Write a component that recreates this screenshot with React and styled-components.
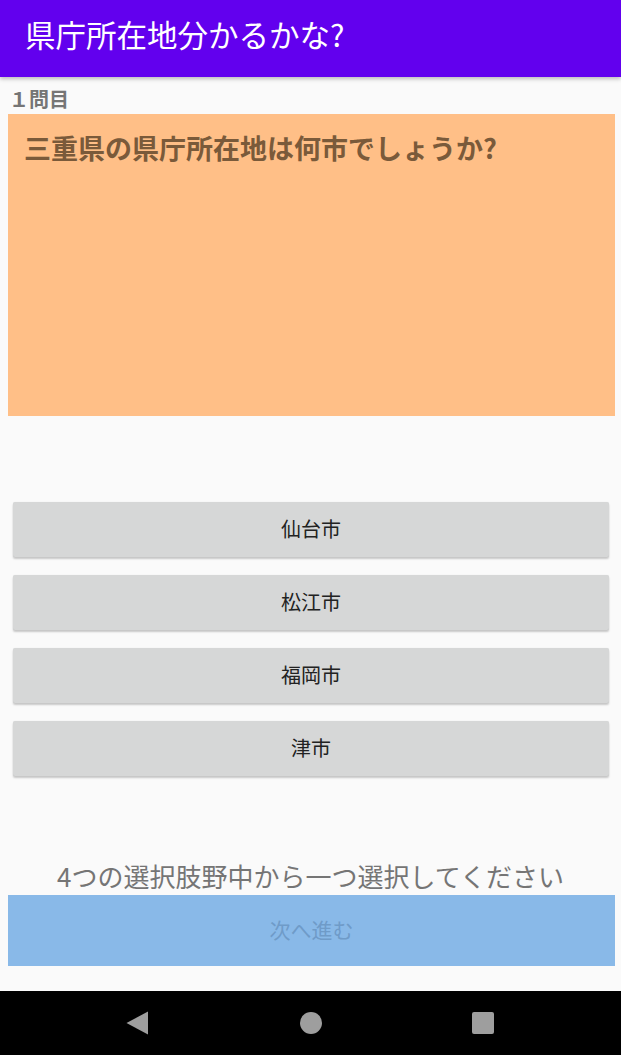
import React, { useState } from "react";
import styled, { createGlobalStyle } from "styled-components";

const Global = createGlobalStyle`
  html, body {
    margin: 0;
    padding: 0;
    background: #fafafa;
  }
  body {
    font-family: "Noto Sans CJK JP", "Noto Sans", sans-serif;
  }
`;

const Screen = styled.div`
  width: 621px;
  height: 1055px;
  display: flex;
  flex-direction: column;
  background: #fafafa;
  overflow: hidden;
`;

const AppBar = styled.header`
  height: 77px;
  flex: none;
  background: #6200ee;
  display: flex;
  align-items: center;
  padding: 0 0 10px 25px;
  box-sizing: border-box;
  box-shadow: 0 2px 4px rgba(0, 0, 0, 0.25);
  position: relative;
  z-index: 1;
`;

const Title = styled.h1`
  margin: 0;
  color: #fff;
  font-size: 30.5px;
  font-weight: 400;
`;

const Main = styled.main`
  flex: 1;
  display: flex;
  flex-direction: column;
`;

const Count = styled.div`
  height: 37px;
  padding: 8px 0 0 9px;
  box-sizing: border-box;
  color: #757575;
  font-size: 20px;
  font-weight: 700;
  line-height: 28px;
`;

const QuestionBox = styled.div`
  height: 302px;
  margin: 0 6px 0 8px;
  background: #ffbf87;
  padding: 14px 16px;
  box-sizing: border-box;
`;

const QuestionText = styled.p`
  margin: 0;
  color: #7a5a3a;
  font-size: 27px;
  font-weight: 700;
  line-height: 40px;
`;

const Choices = styled.div`
  display: flex;
  flex-direction: column;
  gap: 18px;
  margin: 86px 12px 0 13px;
`;

const Choice = styled.button`
  height: 55px;
  padding: 0 0 3px;
  border: none;
  border-radius: 2px;
  background: ${(p) => (p.selected ? "#bdbdbd" : "#d6d7d7")};
  box-shadow: 0 2px 2px rgba(0, 0, 0, 0.2), 0 0 1px rgba(0, 0, 0, 0.12);
  color: #222;
  font-family: inherit;
  font-size: 20px;
  cursor: pointer;
`;

const Hint = styled.p`
  margin: 81px 0 0;
  text-align: center;
  color: #757575;
  font-size: 26px;
  line-height: 38px;
`;

const NextButton = styled.button`
  height: 71px;
  margin: 0 6px 0 8px;
  padding: 0 0 3px;
  border: none;
  background: #89b9e8;
  color: #6f9bc8;
  font-family: inherit;
  font-size: 21px;
`;

const NavBar = styled.nav`
  height: 64px;
  flex: none;
  background: #000;
  display: flex;
  align-items: center;
  justify-content: space-between;
  padding: 0 126px;
  box-sizing: border-box;
`;

const NavIcon = styled.svg`
  width: 24px;
  height: 24px;
  fill: #9e9e9e;
`;

const cities = ["仙台市", "松江市", "福岡市", "津市"];

const App = () => {
  const [picked, setPicked] = useState(null);
  return (
    <>
      <Global />
      <Screen>
        <AppBar>
          <Title>県庁所在地分かるかな?</Title>
        </AppBar>
        <Main>
          <Count>１問目</Count>
          <QuestionBox>
            <QuestionText>三重県の県庁所在地は何市でしょうか?</QuestionText>
          </QuestionBox>
          <Choices>
            {cities.map((c) => (
              <Choice key={c} selected={picked === c} onClick={() => setPicked(c)}>
                {c}
              </Choice>
            ))}
          </Choices>
          <Hint>4つの選択肢野中から一つ選択してください</Hint>
          <NextButton disabled={!picked}>次へ進む</NextButton>
        </Main>
        <NavBar>
          <NavIcon viewBox="0 0 24 24">
            <path d="M22 0.5 L22 23.5 L0.5 12 Z" />
          </NavIcon>
          <NavIcon viewBox="0 0 24 24">
            <circle cx="12" cy="12" r="11" />
          </NavIcon>
          <NavIcon viewBox="0 0 24 24">
            <rect x="1" y="1" width="22" height="22" rx="2" />
          </NavIcon>
        </NavBar>
      </Screen>
    </>
  );
};

export default App;
